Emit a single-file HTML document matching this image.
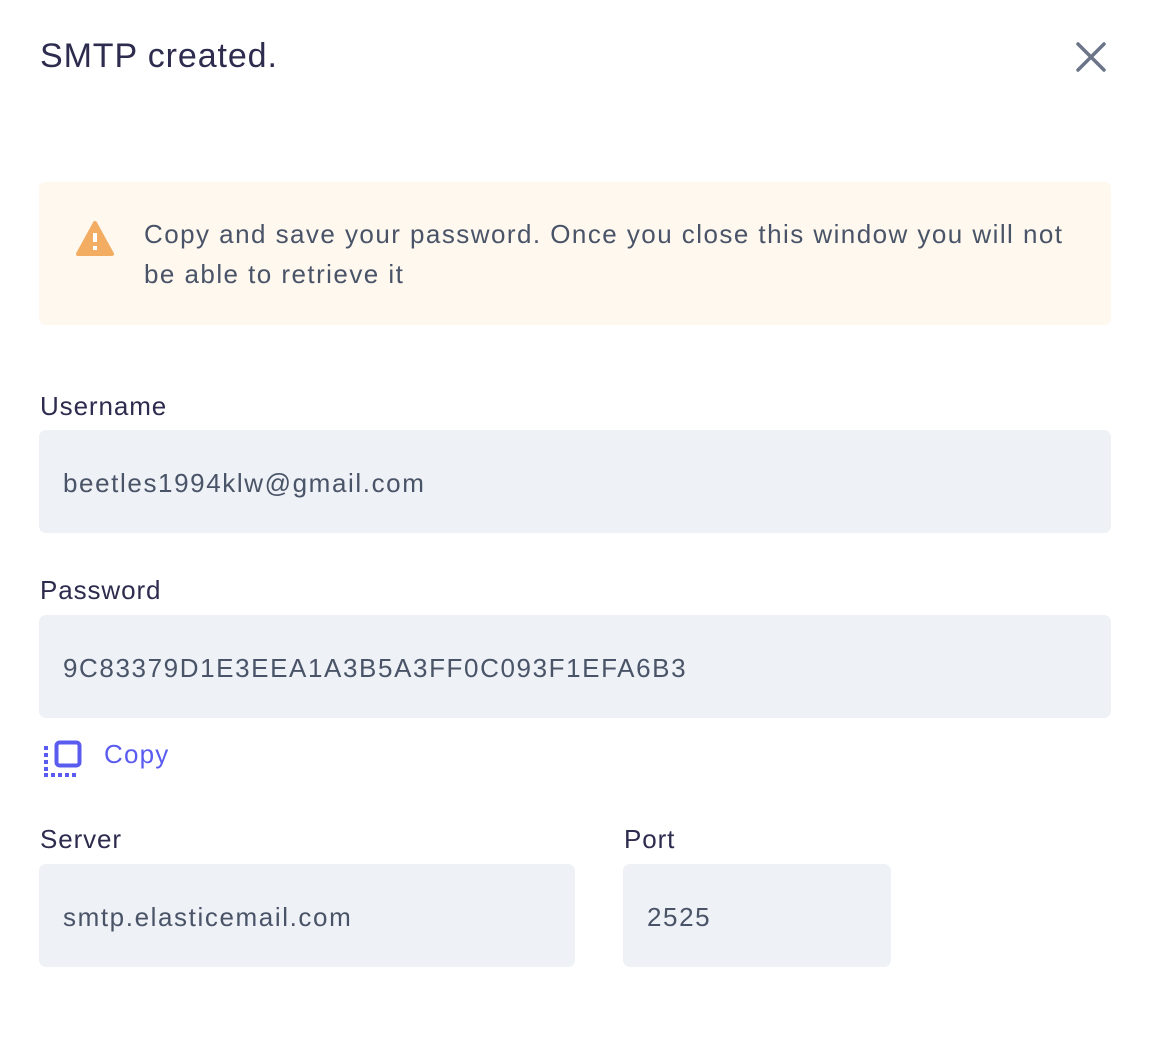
<!DOCTYPE html>
<html><head><meta charset="utf-8"><style>
body{margin:0;width:1152px;height:1042px;background:#fff;font-family:"Liberation Sans",sans-serif;position:relative;overflow:hidden}
.a{position:absolute}
.title{left:40px;top:35px;font-size:34px;color:#2d2b4e;line-height:42px;letter-spacing:0.9px}
.warn{left:39px;top:182px;width:1072px;height:143px;background:#fef8ef;border-radius:6px}
.wt{left:144px;top:214px;font-size:26px;line-height:40px;color:#4a5468;width:935px;letter-spacing:1.45px}
.lbl{font-size:26px;color:#2d2b4e;line-height:30px;letter-spacing:0.9px}
.inp{background:#eef1f5;border-radius:7px;height:103px;font-size:26px;color:#4a5468;line-height:106px;box-sizing:border-box;padding-left:24px;letter-spacing:1.6px}
</style></head><body>
<div class="a title">SMTP created.</div>
<svg class="a" style="left:1074px;top:40px" width="34" height="34" viewBox="0 0 34 34"><path d="M4 4L30 30M30 4L4 30" stroke="#6b7587" stroke-width="3.5" stroke-linecap="round"/></svg>
<div class="a warn"></div>
<svg class="a" style="left:75px;top:220px" width="40" height="38" viewBox="0 0 40 38"><path d="M20 3L37 34H3Z" fill="#f3ad63" stroke="#f3ad63" stroke-width="4" stroke-linejoin="round"/><rect x="18" y="13" width="4" height="9" fill="#fff"/><rect x="18" y="26" width="4" height="4" fill="#fff"/></svg>
<div class="a wt">Copy and save your password. Once you close this window you will not be able to retrieve it</div>
<div class="a lbl" style="left:40px;top:391px">Username</div>
<div class="a inp" style="left:39px;top:430px;width:1072px">beetles1994klw@gmail.com</div>
<div class="a lbl" style="left:40px;top:575px">Password</div>
<div class="a inp" style="left:39px;top:615px;width:1072px">9C83379D1E3EEA1A3B5A3FF0C093F1EFA6B3</div>
<svg class="a" style="left:42px;top:738px" width="42" height="42" viewBox="0 0 42 42"><rect x="14.5" y="4.5" width="23" height="23" rx="3" fill="none" stroke="#5a5cf0" stroke-width="4"/><g fill="#5a5cf0"><rect x="2" y="8" width="4" height="4"/><rect x="2" y="15" width="4" height="4"/><rect x="2" y="22" width="4" height="4"/><rect x="2" y="29" width="4" height="4"/><rect x="2" y="35" width="4" height="4"/><rect x="9" y="35" width="4" height="4"/><rect x="16" y="35" width="4" height="4"/><rect x="23" y="35" width="4" height="4"/><rect x="30" y="35" width="4" height="4"/></g></svg>
<div class="a" style="left:104px;top:738px;font-size:26px;color:#5a5cf0;line-height:32px;letter-spacing:1.2px">Copy</div>
<div class="a lbl" style="left:40px;top:824px">Server</div>
<div class="a inp" style="left:39px;top:864px;width:536px">smtp.elasticemail.com</div>
<div class="a lbl" style="left:624px;top:824px">Port</div>
<div class="a inp" style="left:623px;top:864px;width:268px">2525</div>
</body></html>
